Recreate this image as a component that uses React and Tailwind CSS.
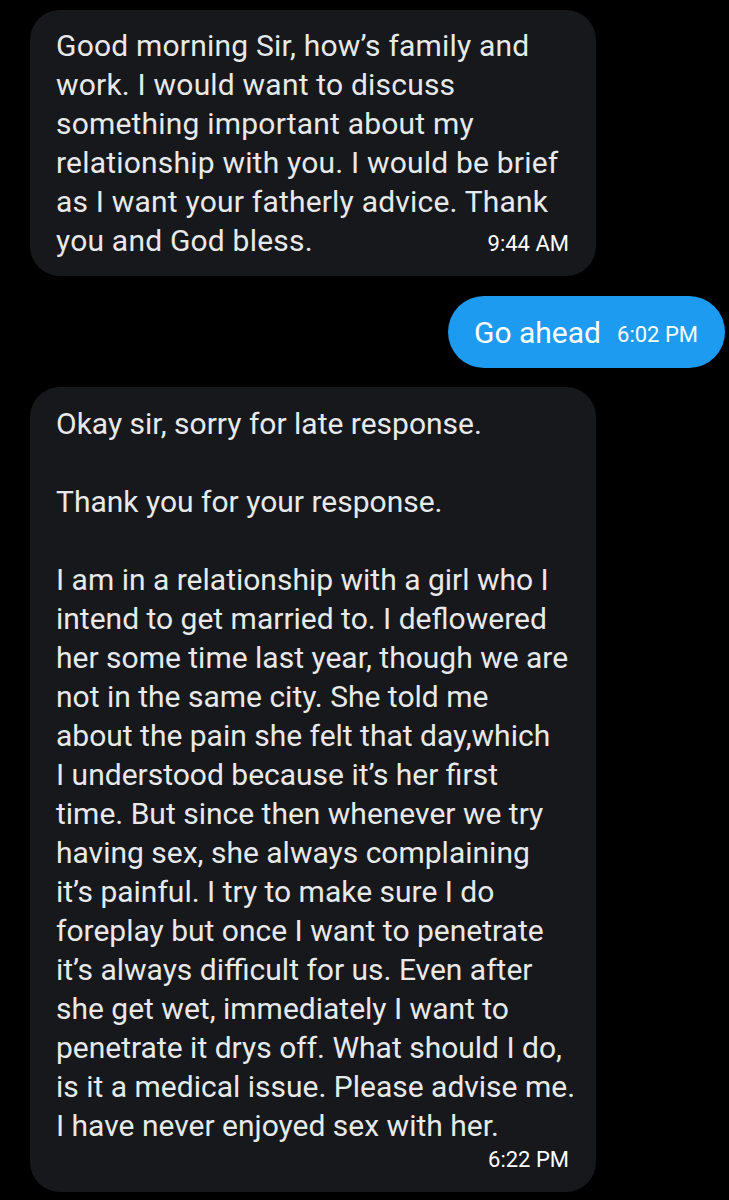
import React from "react";

const msg1 = [
  "Good morning Sir, how’s family and",
  "work. I would want to discuss",
  "something important about my",
  "relationship with you. I would be brief",
  "as I want your fatherly advice. Thank",
];

const msg3 = [
  "Okay sir, sorry for late response.",
  "",
  "Thank you for your response.",
  "",
  "I am in a relationship with a girl who I",
  "intend to get married to. I deflowered",
  "her some time last year, though we are",
  "not in the same city. She told me",
  "about the pain she felt that day,which",
  "I understood because it’s her first",
  "time. But since then whenever we try",
  "having sex, she always complaining",
  "it’s painful. I try to make sure I do",
  "foreplay but once I want to penetrate",
  "it’s always difficult for us. Even after",
  "she get wet, immediately I want to",
  "penetrate it drys off. What should I do,",
  "is it a medical issue. Please advise me.",
  "I have never enjoyed sex with her.",
];

function Line({ children }) {
  return <div className="h-[39px] leading-[39px] whitespace-nowrap">{children || "\u00a0"}</div>;
}

export default function App() {
  return (
    <div
      className="w-[729px] h-[1200px] bg-black overflow-hidden flex flex-col pt-[10px] text-[#e7e9ea]"
      style={{ fontFamily: "Roboto, 'Noto Sans', sans-serif" }}
    >
      <div className="ml-[30px] w-[566px] rounded-[30px] bg-[#17181c] pl-[26px] pr-[27px] pt-[16px] pb-[16px] text-[30px] tracking-[0.2px]">
        {msg1.map((l, i) => (
          <Line key={i}>{l}</Line>
        ))}
        <div className="flex items-center justify-between h-[39px]">
          <span className="leading-[39px] whitespace-nowrap">you and God bless.</span>
          <span className="text-[22px] text-white pt-[6px] tracking-normal">9:44 AM</span>
        </div>
      </div>

      <div className="mt-[20px] self-end mr-[4px] h-[72px] rounded-full bg-[#1d9bf0] flex items-center pl-[26px] pr-[27px] gap-[16px] text-white">
        <span className="text-[30px]">Go ahead</span>
        <span className="text-[22px] pt-[4px]">6:02 PM</span>
      </div>

      <div className="mt-[19px] ml-[30px] w-[566px] rounded-[30px] bg-[#17181c] pl-[26px] pr-[27px] pt-[17px] pb-[21px] text-[30px]">
        {msg3.map((l, i) => (
          <Line key={i}>{l}</Line>
        ))}
        <div className="flex justify-end text-[22px] text-white leading-[22px] mt-[4px]">6:22 PM</div>
      </div>
    </div>
  );
}
